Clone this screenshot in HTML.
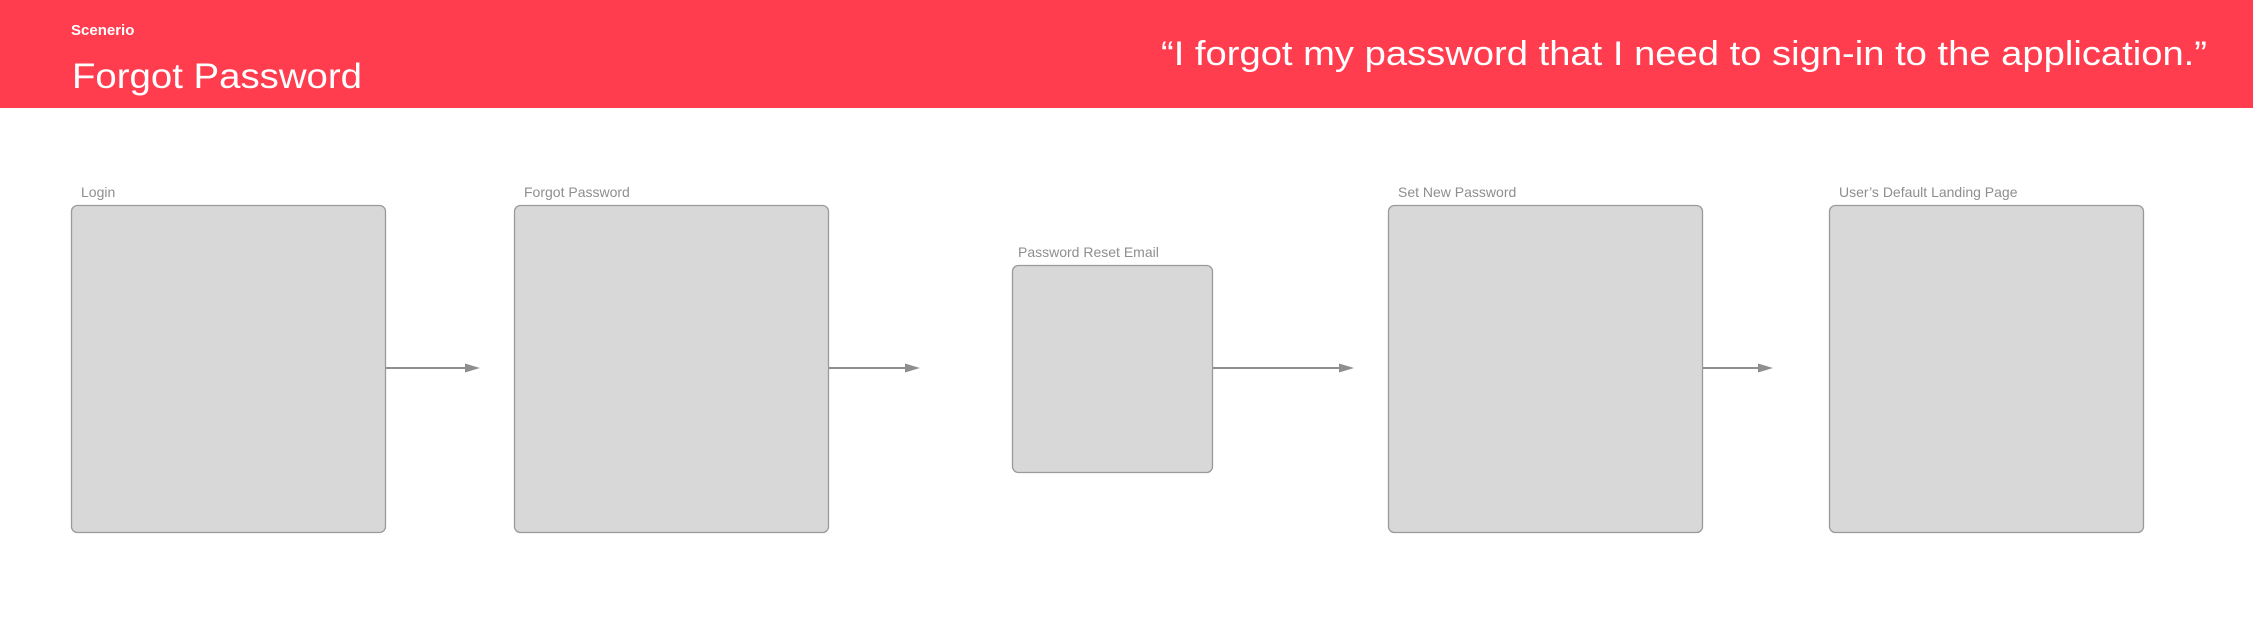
<!DOCTYPE html>
<html><head><meta charset="utf-8"><style>
html,body{margin:0;padding:0;background:#fff;width:2253px;height:620px;overflow:hidden}
svg{display:block}
.lbl{font-family:"Liberation Sans",sans-serif;font-size:14px;fill:#8e8e8e}
</style></head><body>
<svg width="2253" height="620" viewBox="0 0 2253 620" xmlns="http://www.w3.org/2000/svg">
<rect x="0" y="0" width="2253" height="108" fill="#ff3d4f"/>
<text x="71" y="35" font-family="Liberation Sans,sans-serif" font-weight="bold" font-size="15" fill="#fff">Scenerio</text>
<text x="72" y="88" font-family="Liberation Sans,sans-serif" font-size="35" fill="#fff" textLength="290" lengthAdjust="spacingAndGlyphs">Forgot Password</text>
<text x="1161" y="65" font-family="Liberation Sans,sans-serif" font-size="34" fill="#fff" textLength="1046" lengthAdjust="spacingAndGlyphs">“I forgot my password that I need to sign-in to the application.”</text>

<g fill="#d8d8d8" stroke="#9a9a9a" stroke-width="1.3">
<rect x="71.5" y="205.5" width="314" height="327" rx="6"/>
<rect x="514.5" y="205.5" width="314" height="327" rx="6"/>
<rect x="1012.5" y="265.5" width="200" height="207" rx="6"/>
<rect x="1388.5" y="205.5" width="314" height="327" rx="6"/>
<rect x="1829.5" y="205.5" width="314" height="327" rx="6"/>
</g>
<text class="lbl" x="81" y="197">Login</text>
<text class="lbl" x="524" y="197">Forgot Password</text>
<text class="lbl" x="1018" y="257">Password Reset Email</text>
<text class="lbl" x="1398" y="197">Set New Password</text>
<text class="lbl" x="1839" y="197">User’s Default Landing Page</text>

<g stroke="#8e8e8e" stroke-width="2">
<line x1="386" y1="368" x2="466" y2="368"/>
<line x1="829" y1="368" x2="906" y2="368"/>
<line x1="1213" y1="368" x2="1339" y2="368"/>
<line x1="1703" y1="368" x2="1759" y2="368"/>
</g>
<g fill="#8e8e8e">
<polygon points="465,363.5 480,368 465,372.5"/>
<polygon points="905,363.5 920,368 905,372.5"/>
<polygon points="1339,363.5 1354,368 1339,372.5"/>
<polygon points="1758,363.5 1773,368 1758,372.5"/>
</g>
</svg>
</body></html>
